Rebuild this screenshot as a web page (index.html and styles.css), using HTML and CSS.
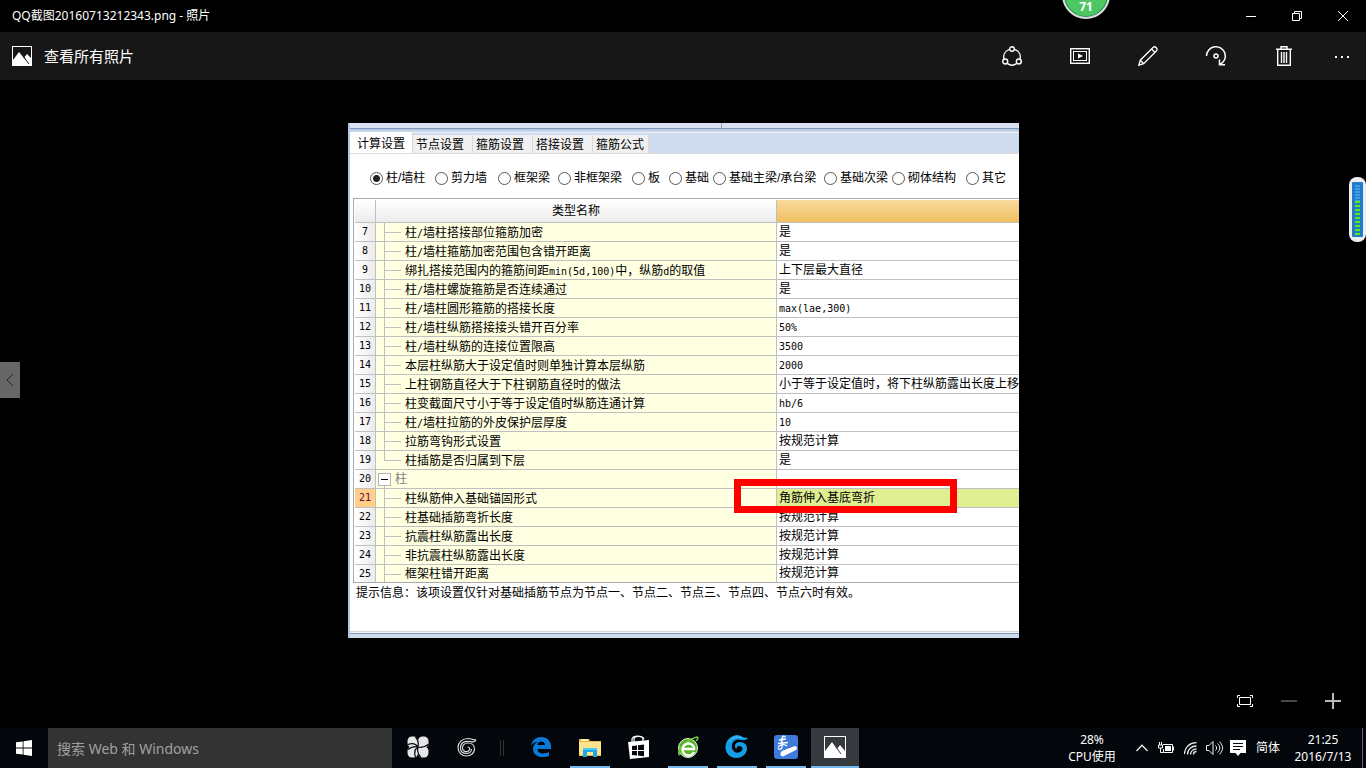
FILE: index.html
```html
<!DOCTYPE html>
<html lang="zh-CN">
<head>
<meta charset="utf-8">
<title>QQ截图20160713212343.png - 照片</title>
<link rel="stylesheet" href="styles.css">
</head>
<body>
<header class="titlebar">
  <h1 class="caption">QQ截图20160713212343.png - 照片</h1>
  <div class="window-buttons">
    <button class="win-btn" aria-label="最小化"><svg width="10" height="10" viewBox="0 0 10 10"><path d="M0 5.5h10" stroke="#fff"/></svg></button>
    <button class="win-btn" aria-label="还原"><svg width="10" height="10" viewBox="0 0 10 10" fill="none" stroke="#fff"><path d="M.5 2.5h7v7h-7zM2.500 2V.5h7v7H8"/></svg></button>
    <button class="win-btn" aria-label="关闭"><svg width="10" height="10" viewBox="0 0 10 10"><path d="M0 0l10 10M10 0L0 10" stroke="#fff"/></svg></button>
  </div>
</header>
<nav class="toolbar">
  <button class="all-photos"><svg width="20" height="20" viewBox="0 0 20 20"><rect x=".5" y=".5" width="19" height="19" fill="none" stroke="#fff"/><path d="M1 14l6-8 7 8.500L12.500 11 15 8l4 4v7H1z" fill="#fff"/><path d="M11 10l6 8" stroke="#171717"/></svg>查看所有照片</button>
  <div class="tools">
    <button class="tool" aria-label="共享"><svg width="20" height="20" viewBox="0 0 20 20" fill="none" stroke="#fff" stroke-width="1.400"><circle cx="10" cy="3" r="2.300"/><circle cx="3.200" cy="15.500" r="2.500"/><circle cx="16.800" cy="15.500" r="2.500"/><path d="M7.500 3.400C3 5 1 9 2 13M12.500 3.400C17 5 19 9 18 13M5.500 17.700c3 2 6 2 9 0"/></svg></button>
    <button class="tool" aria-label="幻灯片放映"><svg width="20" height="16" viewBox="0 0 20 16" fill="none" stroke="#fff"><rect x=".7" y=".7" width="18.600" height="14.600" stroke-width="1.400"/><rect x="3.500" y="3.500" width="13" height="9"/><path d="M8 5.500v5l5-2.500z" fill="#fff" stroke="none"/></svg></button>
    <button class="tool" aria-label="编辑"><svg width="20" height="20" viewBox="0 0 20 20" fill="none" stroke="#fff" stroke-width="1.300"><path d="M.8 19.200l1.500-5L15 1.500c1.200-1 2.400-.8 3.300.2s1 2.200 0 3.300L5.700 17.700zM2.300 14.200l3.400 3.500M13.500 3l3.500 3.500"/></svg></button>
    <button class="tool" aria-label="旋转"><svg width="22" height="22" viewBox="0 0 22 22" fill="none" stroke="#fff" stroke-width="1.500"><path d="M1.500 11A9.400 9.400 0 1 1 15 19.500M14.500 14.500v5.300h5.500"/><circle cx="11" cy="11" r="2"/></svg></button>
    <button class="tool" aria-label="删除"><svg width="18" height="20" viewBox="0 0 18 20" fill="none" stroke="#fff" stroke-width="1.400"><path d="M1 3.300h16M6 3V.8h6V3M2.700 3.500v15.700h12.600V3.500M6.500 6v11M9 6v11M11.500 6v11"/></svg></button>
    <button class="tool more" aria-label="更多"><svg width="16" height="4" viewBox="0 0 16 4" fill="#fff"><path d="M1 2h2v2H1zM7 2h2v2H7zM13 2h2v2h-2z"/></svg></button>
  </div>
</nav>

<main class="viewer">
  <section class="shot">
    <div class="shot-top"></div>
    <div class="tabs" role="tablist">
      <button class="tab active" role="tab" aria-selected="true">计算设置</button>
      <button class="tab" role="tab">节点设置</button>
      <button class="tab" role="tab">箍筋设置</button>
      <button class="tab" role="tab">搭接设置</button>
      <button class="tab" role="tab">箍筋公式</button>
    </div>
    <form class="kinds">
      <label><input type="radio" name="kind" checked>柱/墙柱</label>
      <label><input type="radio" name="kind">剪力墙</label>
      <label><input type="radio" name="kind">框架梁</label>
      <label><input type="radio" name="kind">非框架梁</label>
      <label><input type="radio" name="kind">板</label>
      <label><input type="radio" name="kind">基础</label>
      <label><input type="radio" name="kind">基础主梁/承台梁</label>
      <label><input type="radio" name="kind">基础次梁</label>
      <label><input type="radio" name="kind">砌体结构</label>
      <label><input type="radio" name="kind">其它</label>
    </form>
    <div class="grid">
      <table>
        <colgroup><col class="c-no"><col class="c-name"><col></colgroup>
        <thead><tr><th></th><th>类型名称</th><th class="hot"></th></tr></thead>
        <tbody>
          <tr><th>7</th><td>柱<span class="en">/</span>墙柱搭接部位箍筋加密</td><td>是</td></tr>
          <tr><th>8</th><td>柱<span class="en">/</span>墙柱箍筋加密范围包含错开距离</td><td>是</td></tr>
          <tr><th>9</th><td>绑扎搭接范围内的箍筋间距<span class="en">min(5d,100)</span>中，纵筋<span class="en">d</span>的取值</td><td>上下层最大直径</td></tr>
          <tr><th>10</th><td>柱<span class="en">/</span>墙柱螺旋箍筋是否连续通过</td><td>是</td></tr>
          <tr><th>11</th><td>柱<span class="en">/</span>墙柱圆形箍筋的搭接长度</td><td><span class="en">max(lae,300)</span></td></tr>
          <tr><th>12</th><td>柱<span class="en">/</span>墙柱纵筋搭接接头错开百分率</td><td><span class="en">50%</span></td></tr>
          <tr><th>13</th><td>柱<span class="en">/</span>墙柱纵筋的连接位置限高</td><td><span class="en">3500</span></td></tr>
          <tr><th>14</th><td>本层柱纵筋大于设定值时则单独计算本层纵筋</td><td><span class="en">2000</span></td></tr>
          <tr><th>15</th><td>上柱钢筋直径大于下柱钢筋直径时的做法</td><td>小于等于设定值时，将下柱纵筋露出长度上移</td></tr>
          <tr><th>16</th><td>柱变截面尺寸小于等于设定值时纵筋连通计算</td><td><span class="en">hb/6</span></td></tr>
          <tr><th>17</th><td>柱<span class="en">/</span>墙柱拉筋的外皮保护层厚度</td><td><span class="en">10</span></td></tr>
          <tr><th>18</th><td>拉筋弯钩形式设置</td><td>按规范计算</td></tr>
          <tr class="last-child"><th>19</th><td>柱插筋是否归属到下层</td><td>是</td></tr>
          <tr class="group"><th>20</th><td><button class="fold" aria-label="折叠"></button>柱</td><td></td></tr>
          <tr class="current"><th>21</th><td>柱纵筋伸入基础锚固形式</td><td>角筋伸入基底弯折</td></tr>
          <tr><th>22</th><td>柱基础插筋弯折长度</td><td>按规范计算</td></tr>
          <tr><th>23</th><td>抗震柱纵筋露出长度</td><td>按规范计算</td></tr>
          <tr><th>24</th><td>非抗震柱纵筋露出长度</td><td>按规范计算</td></tr>
          <tr class="cut"><th>25</th><td>框架柱错开距离</td><td>按规范计算</td></tr>
        </tbody>
      </table>
      <div class="red-frame"></div>
    </div>
    <p class="hint">提示信息：该项设置仅针对基础插筋节点为节点一、节点二、节点三、节点四、节点六时有效。</p>
    <div class="shot-bottom"></div>
  </section>
  <button class="previous" aria-label="上一张"><svg width="8" height="14" viewBox="0 0 8 14" fill="none" stroke="#222"><path d="M7 1L1 7l6 6"/></svg></button>
  <div class="zoom-bar">
    <button aria-label="适应窗口"><svg width="16" height="12" viewBox="0 0 16 12" fill="none" stroke="#fff"><path d="M2.500 2.500h11v7h-11zM.5 3V.5H3M13 .5h2.500V3M15.500 9v2.500H13M3 11.500H.5V9"/></svg></button>
    <button aria-label="缩小"><svg width="16" height="16" viewBox="0 0 16 16"><path d="M0 8h16" stroke="#484848" stroke-width="2"/></svg></button>
    <button aria-label="放大"><svg width="16" height="16" viewBox="0 0 16 16"><path d="M0 8h16M8 0v16" stroke="#bbb" stroke-width="2"/></svg></button>
  </div>
</main>

<footer class="taskbar">
  <button class="start" aria-label="开始"><svg width="16" height="16" viewBox="0 0 16 16" fill="#fff"><path d="M0 2.300L6.700 1.400v6.100H0zM7.500 1.300L16 0v7.500H7.500zM0 8.400h6.700v6.200L0 13.700zM7.500 8.400H16V16l-8.500-1.200z"/></svg></button>
  <input class="search" type="text" placeholder="搜索 Web 和 Windows" aria-label="搜索 Web 和 Windows">
  <div class="apps">
    <button class="app" aria-label="花瓣"><svg width="22" height="22" viewBox="0 0 22 22"><g fill="#e6e6e6"><rect x=".5" y=".5" width="10.500" height="11" rx="4.500"/><rect x="11" y=".5" width="10.500" height="11" rx="4.500"/><rect x=".5" y="10.500" width="10.500" height="11" rx="4.500"/><rect x="11" y="10.500" width="10.500" height="11" rx="4.500"/><path d="M6 6h10v10H6z"/></g><path d="M11 11C12 7 11 4 8.500 1M11 11c4 1 7 0 10-2.500M11 11c-1 4 0 7 2.500 10M11 11c-4-1-7 0-10 2.500M11 11C9 8 5 7 1 8.500M11 11c-3 2-4 6-2.500 10" fill="none" stroke="#03060a" stroke-width="1.200"/></svg></button>
    <button class="app" aria-label="G 浏览器"><svg width="20" height="20" viewBox="0 0 20 20" fill="none" stroke="#ddd" stroke-width="1.200"><path d="M19 2.500c-3 1-4-1-8-1-6 0-10 4-10 9s4 8.500 8.500 8.500 8-3 8-7-3-6-6.500-6-6 2.500-5.500 5.500 4 4 6 2.500 1.500-4-1-4M19 2.500c-1 3-3 2.500-6 2C7 3.500 3.500 6 3.500 11c0 4 3 5.500 6 5.500 3 0 5-2 5-4.500"/></svg></button>
    <span class="divider"></span>
    <button class="app" aria-label="Edge"><svg width="20" height="20" viewBox="0 0 20 20"><path d="M0 9C1 3 5 0 10.500 0 16 0 20 4 20 9.500V12H6.500c0 5 7 5.500 11.500 3v4C10 22 2 19 2 12c0-4 2.500-6 5-7C3 5 1 7 0 9zM6.500 8H14c0-4-6.500-5-7.500 0z" fill="#0a78d7"/></svg></button>
    <button class="app open" aria-label="文件资源管理器"><svg width="22" height="19" viewBox="0 0 22 19"><path d="M0 1h10l1 2h11v15H0z" fill="#e9b84c"/><path d="M0 4h22v13H0z" fill="#ffe38c"/><path d="M2 1h7v2H2z" fill="#fff2a8"/><path d="M4 10h14v9h-4v-5H8v5H4z" fill="#1ea7e8"/><path d="M4 10h14v2H4z" fill="#46cbf5"/></svg></button>
    <button class="app" aria-label="应用商店"><svg width="22" height="24" viewBox="0 0 22 24"><path d="M0 7l21-2v17L2 24z" fill="#fff"/><path d="M6 8V4c0-3 9-4 9 0v3M4 7V4c1-4 10-4 12 0" fill="none" stroke="#fff" stroke-width="1.200"/><path d="M4 11l5-.6v4.600H4zm6-.7l6-.7V15h-6zM4 16h5v4.500L4 20zm6 0h6v5.200l-6-.6z" fill="#05070b"/></svg></button>
    <button class="app open" aria-label="绿色浏览器"><svg width="22" height="22" viewBox="0 0 22 22"><circle cx="11" cy="12" r="9.500" fill="#58b52b" stroke="#e7f5df"/><path d="M3 19C-2 17 9 4 20 1c2 1 0 3-1 4" fill="none" stroke="#6ecb37" stroke-width="1.600"/><path d="M17 16a6 6 0 1 1 0-5v2H7" fill="none" stroke="#fff" stroke-width="2.400"/></svg></button>
    <button class="app open" aria-label="广联达"><svg width="24" height="24" viewBox="0 0 24 24"><path d="M23 3c-2 3-5 2-7 2-6-2-10 3-9 8 1 4 5 6 8 4 4-2 3-6-1-6-2 0-3 2-2 3-4-2-2-7 3-7 7 0 9 7 5 12-5 6-14 5-18-1C-2 11 2 1 12 0c4 0 5 3 11 3z" fill="#169ee6"/><path d="M4 7c3-5 8-6 13-4" fill="none" stroke="#54c9ff"/></svg></button>
    <button class="app open" aria-label="钢筋算量"><svg width="24" height="24" viewBox="0 0 24 24"><rect width="24" height="24" rx="3" fill="#3e7bdc"/><path d="M11.500 2C8.500 0 8 2.500 8 4.500V12c0 2.500-3 3-4 1M4 8.500l10-1M5 5l7-1M4 12c3-3 7-3 9-1" fill="none" stroke="#fff" stroke-width="1.300"/><path d="M9 15.500L21 11c2 0 2.500 3 1 4L10 21c-4 2-5-4-1-5.500z" fill="#fff"/></svg></button>
    <button class="app open focused" aria-label="照片"><svg width="22" height="22" viewBox="0 0 22 22"><rect x=".5" y=".5" width="21" height="21" fill="none" stroke="#fff"/><path d="M1 15l7-9 5 7 3-4 5 6v6H1z" fill="#fff"/><path d="M12 11l5 7" stroke="#36393d"/></svg></button>
  </div>
  <div class="tray">
    <div class="cpu">28%<br>CPU使用</div>
    <div class="tray-icons">
      <button aria-label="显示隐藏的图标"><svg width="12" height="8" viewBox="0 0 12 8" fill="none" stroke="#eee" stroke-width="1.300"><path d="M.5 7L6 1.200 11.500 7"/></svg></button>
      <button aria-label="电源"><svg width="16" height="12" viewBox="0 0 16 12" fill="none" stroke="#fff"><path d="M5 2.500h9.500v8h-9V7M15.500 4.500v4M.5 3v3h4V3zM1.500 3V0M3.500 3V0M2.500 6v4.500H5"/><path d="M7 4h6v5H7z" fill="#fff" stroke="none"/></svg></button>
      <button aria-label="网络"><svg width="13" height="13" viewBox="0 0 13 13" fill="none" stroke="#eee" stroke-width="1.300"><path d="M.5 12C.5 5 6 .7 12.500 .7M3.500 12.500C3.500 7 7.500 4 12.500 4M6.500 12.500c0-3 2.500-5.500 6-5.500M9.500 12.500c0-2 1-3 3-3"/></svg></button>
      <button aria-label="音量"><svg width="17" height="14" viewBox="0 0 17 14" fill="none" stroke="#eee"><path d="M.5 4.500h2.500l4-4v13l-4-4H.500zM9.500 4.500c1.500 1.500 1.500 3.500 0 5M11.500 2.500c3 3 3 6 0 9M13.500.8c4 4 4 8.500 0 12.400"/></svg></button>
      <button aria-label="通知"><svg width="16" height="16" viewBox="0 0 16 16"><path d="M0 0h16v13h-5.500L8 16l-2.500-3H0z" fill="#fff"/><path d="M3 3.500h10M3 6.500h10M3 9.500h7" stroke="#05070b"/></svg></button>
    </div>
    <button class="ime">简体</button>
    <div class="clock">21:25<br>2016/7/13</div>
    <button class="desktop" aria-label="显示桌面"></button>
  </div>
</footer>

<div class="speed-ball">71</div>
<div class="meter"><div class="meter-face"><span class="meter-idle"></span><span class="meter-live"></span></div></div>
</body>
</html>
```
FILE: styles.css
```css
* { box-sizing: border-box; }
body {
  margin: 0;
  min-height: 100vh;
  display: flex;
  flex-direction: column;
  position: relative;
  overflow: hidden;
  background: #000;
  color: #fff;
  font: 12px/16px "Noto Sans", "Noto Sans CJK SC", sans-serif;
}
button {
  margin: 0;
  padding: 0;
  border: 0;
  background: none;
  color: inherit;
  font: inherit;
  display: flex;
  align-items: center;
  justify-content: center;
}
svg { display: block; flex: none; }

/* window chrome */
.titlebar { height: 32px; display: flex; justify-content: space-between; align-items: center; padding-left: 12px; }
.caption { margin: 0; font-size: 12px; font-weight: 400; }
.window-buttons { display: flex; }
.win-btn { width: 46px; height: 32px; }
.toolbar { height: 48px; display: flex; justify-content: space-between; background: #171717; }
.all-photos { padding-left: 12px; gap: 12px; font-size: 15px; }
.tools { display: flex; }
.tool { width: 68px; height: 48px; }
.tool.more { width: 48px; }

/* picture area */
.viewer { flex: 1; position: relative; padding: 43px 347px 90px 348px; }
.shot {
  background: #fff;
  color: #000;
  border-left: 2px solid #b4c7e0;
  font: 12px/18px "Liberation Sans", "Noto Sans CJK SC", sans-serif;
}
.shot-top {
  height: 10px;
  background:
    linear-gradient(#8ba3c5, #8ba3c5) 371px 0 / 1px 5px no-repeat,
    linear-gradient(#d7e3f2 5px, #8199bd 5px, #8199bd 6px, #b1c4de 6px, #d0dced 9px, #eef2f8 9px);
}
.tabs { display: flex; align-items: flex-end; height: 21px; background: #cfdcee; border-bottom: 1px solid #dcdcdc; }
.tab { height: 18px; padding: 2px 8px 0 3px; background: #f0f0f0; border-right: 1px solid #d8d8d8; }
.tab:last-child { padding-right: 4px; }
.tab.active { height: 21px; padding: 2px 7px 0; background: #fff; }
.kinds {
  display: grid;
  grid-template-columns: 65px 63px 60px 74px 37px 44px 111px 68px 74px 1fr;
  padding: 15px 0 11px 20px;
}
.kinds label { display: flex; align-items: center; gap: 3px; white-space: nowrap; }
.kinds input {
  appearance: none;
  flex: none;
  width: 13px;
  height: 13px;
  margin: 0;
  border: 1px solid #555;
  border-radius: 50%;
  background: #fff;
}
.kinds input:checked { background: radial-gradient(circle, #222 3px, #fff 4px); }

/* settings table */
.grid { position: relative; margin-left: 3px; padding: 1px 0 0 1px; border: 1px solid #a9a9b0; border-right: 0; }
table { width: 100%; table-layout: fixed; border-collapse: separate; border-spacing: 0; }
.c-no { width: 21px; }
.c-name { width: 401px; }
th, td {
  height: 19px;
  padding: 0;
  border-right: 1px solid #c0c0c0;
  border-bottom: 1px solid #c0c0c0;
  font-weight: 400;
  line-height: 18px;
  white-space: nowrap;
  overflow: hidden;
}
th:last-child, td:last-child { border-right: 0; }
thead th { height: 23px; line-height: 22px; background: linear-gradient(#fff, #ececec); }
thead .hot { background: linear-gradient(#f9d99d, #f0bf60); }
tbody th { background: linear-gradient(90deg, #fff, #ececec); font: 10px/18px "DejaVu Sans Mono", monospace; }
td:nth-child(2) {
  padding: 2px 0 0 29px;
  line-height: 16px;
  background:
    linear-gradient(#c0c0c0, #c0c0c0) 8px 0 / 1px 100% no-repeat,
    linear-gradient(#c0c0c0, #c0c0c0) 8px 9px / 17px 1px no-repeat,
    #ffffe1;
}
.last-child td:nth-child(2) {
  background:
    linear-gradient(#c0c0c0, #c0c0c0) 8px 0 / 1px 10px no-repeat,
    linear-gradient(#c0c0c0, #c0c0c0) 8px 9px / 17px 1px no-repeat,
    #ffffe1;
}
.group td:nth-child(2) {
  display: flex;
  align-items: center;
  gap: 4px;
  padding: 0 0 0 2px;
  line-height: 18px;
  color: #808080;
  background: linear-gradient(#c0c0c0, #c0c0c0) 8px 100% / 1px 4px no-repeat, #ffffe1;
}
.fold { width: 13px; height: 13px; border: 1px solid #b4b4b4; background: linear-gradient(#000, #000) center / 7px 1px no-repeat #fff; }
td:nth-child(3) { padding-left: 2px; }
.current th { background: #ffcf87; color: #6b0a4a; }
.current td:nth-child(3) { background: #e0ee92; }
.cut th, .cut td { height: 17px; line-height: 17px; border-bottom: 0; }
.cut td:nth-child(2) { line-height: 15px; }
.en { font: 10px/14px "DejaVu Sans Mono", monospace; }
.red-frame { position: absolute; left: 380px; top: 280px; width: 223px; height: 34px; border: 7px solid #f00; }
.hint { margin: 0; padding: 1px 0 29px 6px; }
.shot-bottom {
  height: 7px;
  background: linear-gradient(#d6d6d6 1px, #f4f4f4 1px, #f4f4f4 2px, #8199bd 2px, #8199bd 3px, #cfdcee 3px);
}

/* overlays on the picture area */
.previous { position: absolute; left: 0; top: 282px; width: 20px; height: 36px; background: #666; }
.zoom-bar { position: absolute; right: 11px; bottom: 5px; display: flex; }
.zoom-bar button { width: 44px; height: 44px; }

/* taskbar */
.taskbar { height: 40px; display: flex; background: #03060a; }
.start { width: 48px; height: 40px; }
.search {
  width: 344px;
  height: 40px;
  padding: 0 9px;
  border: 0;
  border-radius: 0;
  background: #333;
  color: #fff;
  font: 14px/20px "Noto Sans", "Noto Sans CJK SC", sans-serif;
}
.search::placeholder { color: #a0a0a0; opacity: 1; }
.apps { display: flex; align-items: center; gap: 1px; padding-left: 2px; }
.app { width: 48px; height: 40px; border-bottom: 2px solid transparent; position: relative; }
.app.open::after { content: ""; position: absolute; left: 4px; right: 4px; bottom: -2px; height: 2px; background: #76b9ed; }
.app.focused { background: #36393d; }
.app.focused::after { left: 0; right: 0; }
.divider { width: 4px; height: 16px; margin: 0 12px 0 8px; border: solid #333; border-width: 0 1px; }
.tray { display: flex; align-items: center; margin-left: auto; text-align: center; }
.cpu { width: 60px; line-height: 17px; }
.tray-icons { display: flex; padding-left: 8px; }
.tray-icons button { width: 24px; height: 40px; }
.ime { width: 36px; height: 40px; }
.clock { width: 74px; line-height: 17px; font-size: 12px; }
.desktop { width: 4px; height: 40px; margin-left: 2px; border-left: 1px solid #666; }

/* desktop widgets */
.speed-ball {
  position: absolute;
  right: 256px;
  top: -29px;
  width: 48px;
  height: 48px;
  padding-top: 27px;
  border: 2px solid #ddd;
  border-radius: 50%;
  background: #4cc764;
  box-shadow: inset 0 0 0 1px #258a56;
  font: bold 12px/14px "Noto Sans", sans-serif;
  text-align: center;
}
.meter { position: absolute; right: 0; top: 177px; width: 17px; height: 65px; padding: 5px 3px; border-radius: 8px; background: #eee; }
.meter-face { height: 55px; padding: 3px; background: #1f7bd0; border-radius: 1px; }
.meter-idle, .meter-live { display: block; height: 16px; background: repeating-linear-gradient(#4a9be4 0 2px, #1f7bd0 2px 3px); }
.meter-live { height: 35px; background: repeating-linear-gradient(#5cf000 0 2px, #1f7bd0 2px 4px); }
```
